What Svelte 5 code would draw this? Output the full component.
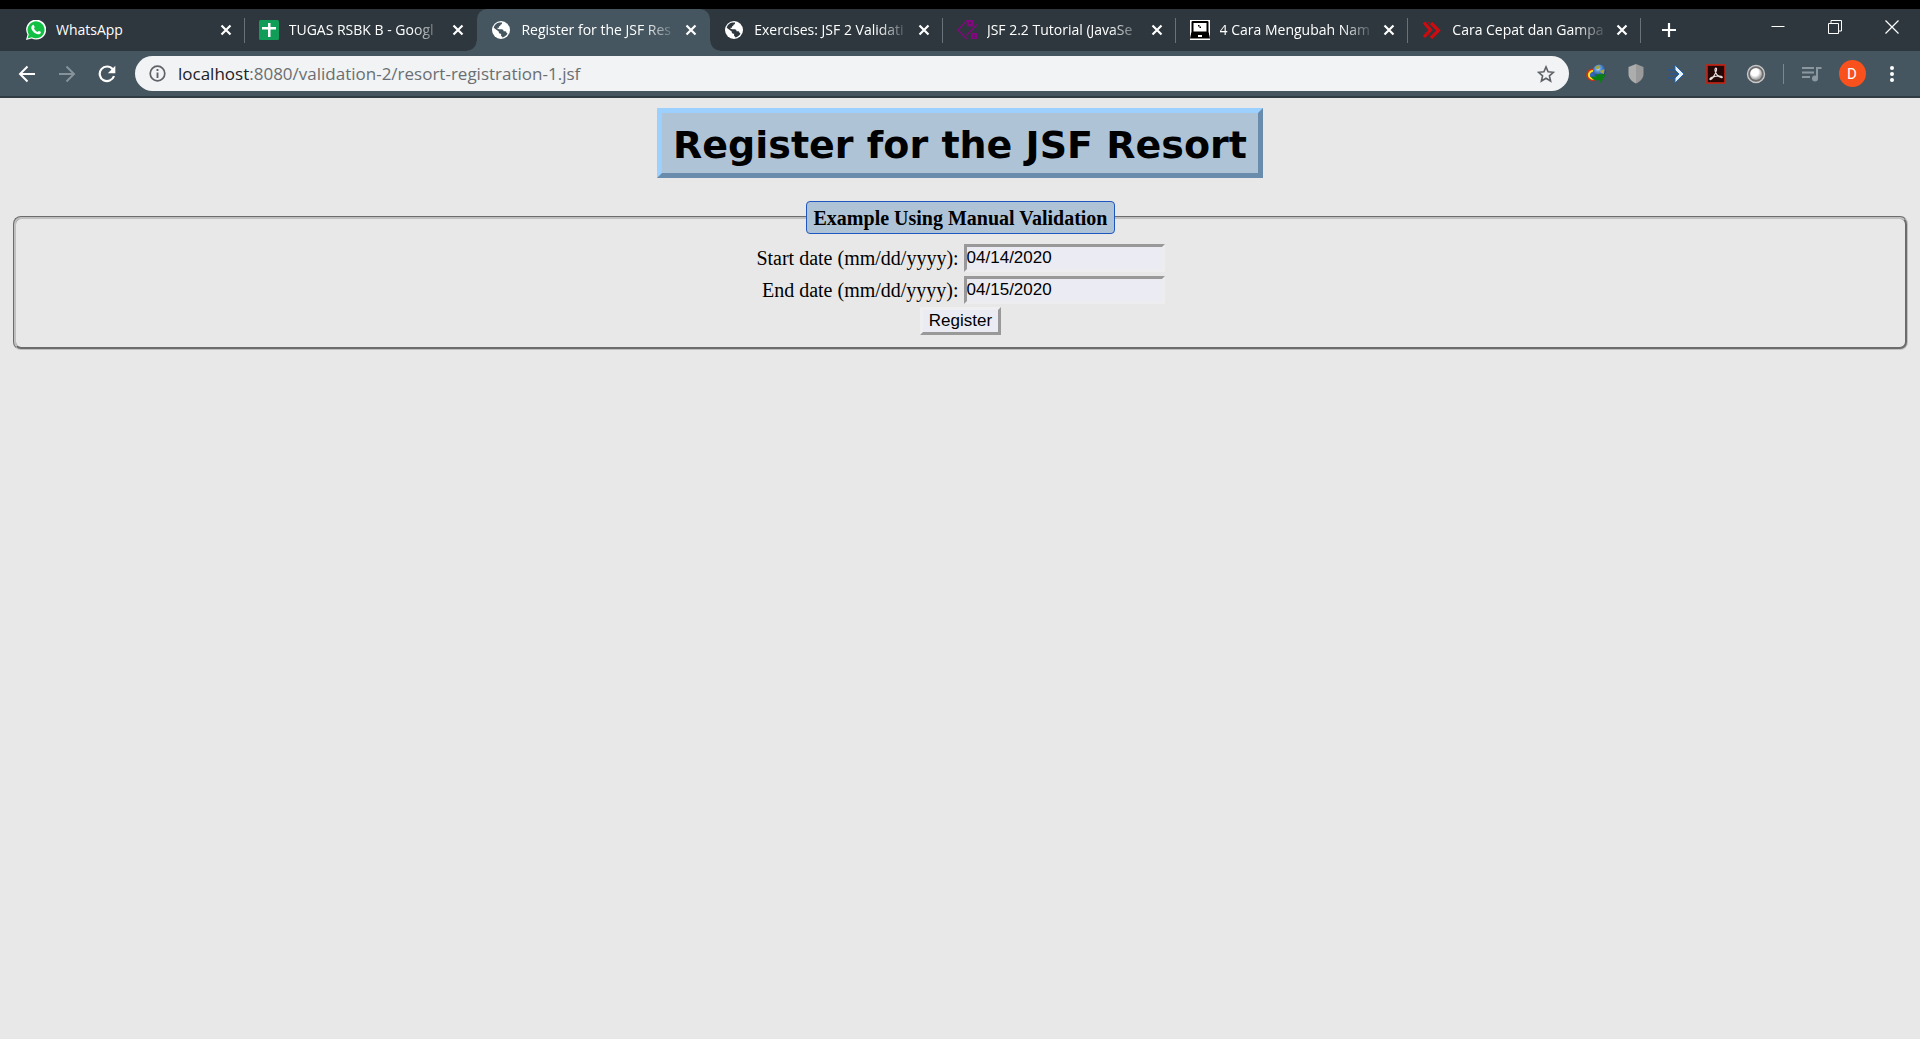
<script>
  const tabs = [
    { icon: 'whatsapp', title: 'WhatsApp' },
    { icon: 'sheets', title: 'TUGAS RSBK B - Googl' },
    { icon: 'globe', title: 'Register for the JSF Res', active: true },
    { icon: 'globe', title: 'Exercises: JSF 2 Validati' },
    { icon: 'tag', title: 'JSF 2.2 Tutorial (JavaSe' },
    { icon: 'laptop', title: '4 Cara Mengubah Nam' },
    { icon: 'chevrons', title: 'Cara Cepat dan Gampa' }
  ];
  let startDate = $state('04/14/2020');
  let endDate = $state('04/15/2020');
</script>

{#snippet favicon(name)}
  <svg class="favicon" viewBox="0 0 20 20" aria-hidden="true">
    {#if name === 'whatsapp'}
      <path d="M0 20 1.5 14.6A10 10 0 1 1 5.6 18.5z" fill="#fff" />
      <path d="M1.6 18.4 2.8 14.3A8.5 8.5 0 1 1 5.8 17.2z" fill="#12c143" />
      <path d="M6.7 5.1c.5-.4 1-.3 1.3.3l.7 1.6c.1.6-.8 1.2-.7 1.6.7 1.6 1.8 2.6 3.4 3.3.5 0 1-1.1 1.5-1l1.8.9c.5.4.1 1.5-.5 2-1.4 1-3.3.5-5-.6-1.6-1-3.2-2.7-3.8-4.5-.4-1.5.3-2.9 1.3-3.6z" fill="#fff" />
    {:else if name === 'sheets'}
      <rect width="20" height="20" rx="1.5" fill="#109d58" />
      <path d="M9 3h2.500v4H17v2.500h-5.500V17H9V9.500H3V7h6z" fill="#fff" />
    {:else if name === 'globe'}
      <circle cx="10" cy="10" r="9" fill="#fff" />
      <path class="land" d="M8.500 2.600 11 2.500c.2 1.200-.3 1.900-1.500 2.200-.1 1-.6 1.500-1.500 1.500v1.600H6.400c0 1 .5 1.400 1.600 1.400h2.600c1.300 0 2 .8 2 2h1.300c1 0 1.500.5 1.500 1.500l1.100.9c-1 2-3 3.600-5.200 3.900.1-1-.5-1.300-1.200-1.500v-2.300c-1.600 0-2.400-.8-2.400-2.300L2.700 7.700C3.400 5 5.500 3 8.500 2.600z" />
      <path d="M10.500 6.500c1.800.2 2.300-.7 2.600-2l2-.2 2.400 4-1 1.200-3-.2-.8-1.400-2.200-.2z" fill="#fff" />
    {:else if name === 'tag'}
      <g fill="none" stroke="#85077f" stroke-width="1.4">
        <path d="M10 .5 .9 10l9.100 9M20 4.500 9.500 15.500" />
      </g>
      <path d="M10 0h6.500v6.500H10zM14 13h6v6h-6z" fill="#85077f" />
      <path d="M12 2h2v2h-2zM16 15h2v1h-2zM16 17h2v1h-2z" fill="#4f1c56" />
    {:else if name === 'laptop'}
      <rect width="20" height="20" fill="#fff" />
      <path d="M2.500 1h15q1 0 1 1v9.500l1.500 7H0l1.500-7V2q0-1 1-1zM3.500 3v8.500h13V3z" fill="#000" fill-rule="evenodd" />
      <path d="M8 5h1.500v1.500H11V8H9.500V6.500H8z" fill="#000" />
      <path d="M8 15h4v2H8z" fill="#fff" />
    {:else}
      <g fill="none" stroke="#d00b10" stroke-width="3.2">
        <path d="m2 2.500 6.500 7.500L2 17" />
        <path d="m9 3 7.500 7.500L9 18" />
      </g>
      <path d="m5 1 3 3M3 12l5 4" stroke="#b20d12" />
    {/if}
  </svg>
{/snippet}

<div class="browser">
  <header>
    <div class="tabstrip">
      <div class="tabs">
        {#each tabs as tab}
          <div class="tab" class:active={tab.active}>
            {@render favicon(tab.icon)}
            <span class="title" class:faded={tab.title.length > 16}>{tab.title}</span>
            <button class="close" aria-label="Close tab">
              <svg width="12" height="12" viewBox="0 0 12 12"><path d="m1.500 1.500 9 9m0-9-9 9" stroke="#fff" stroke-width="2.2" /></svg>
            </button>
          </div>
        {/each}
      </div>
      <button class="newtab" aria-label="New tab">
        <svg width="16" height="16" viewBox="0 0 16 16"><path d="M8 1v14M1 8h14" stroke="#fff" stroke-width="2.2" /></svg>
      </button>
      <div class="window-controls">
        <button aria-label="Minimize"><svg width="14" height="14" viewBox="0 0 14 14"><path d="M.5 6.500h13" stroke="#fff" /></svg></button>
        <button aria-label="Restore"><svg width="14" height="14" viewBox="0 0 14 14"><path d="M.5 3.500h10v10H.5zM3 3V.5h10.500V11H11" fill="none" stroke="#fff" /></svg></button>
        <button aria-label="Close"><svg width="14" height="14" viewBox="0 0 14 14"><path d="m.5.5 13 13m0-13-13 13" stroke="#fff" stroke-width="1.2" /></svg></button>
      </div>
    </div>

    <div class="toolbar">
      <button class="tool" aria-label="Back">
        <svg width="18" height="18" viewBox="0 0 18 18"><path d="M17 9H2m7.500-7.500L2 9l7.500 7.500" fill="none" stroke="#fff" stroke-width="2" /></svg>
      </button>
      <button class="tool" aria-label="Forward">
        <svg width="18" height="18" viewBox="0 0 18 18"><path d="M1 9h15M8.500 1.500 16 9l-7.500 7.500" fill="none" stroke="#87939a" stroke-width="2" /></svg>
      </button>
      <button class="tool" aria-label="Reload">
        <svg width="18" height="18" viewBox="0 0 18 18"><path d="M14.700 4.200A7.300 7.300 0 1 0 16 11" fill="none" stroke="#fff" stroke-width="2.2" /><path d="M17.300.7v7.500H9.800z" fill="#fff" /></svg>
      </button>
      <div class="address">
        <svg width="17" height="17" viewBox="0 0 17 17" aria-hidden="true"><circle cx="8.5" cy="8.5" r="7.3" fill="none" stroke="#5f6368" stroke-width="1.7" /><path d="M8.500 7.500V13M8.500 4v2" stroke="#5f6368" stroke-width="1.9" /></svg>
        <div class="url"><b>localhost</b>:8080/validation-2/resort-registration-1.jsf</div>
        <button class="star" aria-label="Bookmark this page">
          <svg width="18" height="18" viewBox="0 0 18 18"><path d="m9 1.900 2.100 4.900 5.300.5-4 3.500 1.200 5.200L9 13.200 4.400 16l1.200-5.200-4-3.500 5.300-.5z" fill="none" stroke="#5f6368" stroke-width="1.6" /></svg>
        </button>
      </div>
      <button class="tool" aria-label="Download manager">
        <svg width="20" height="20" viewBox="0 0 20 20">
          <defs><radialGradient id="ball" cx=".4" cy=".3" r=".7"><stop stop-color="#e7f2ff" /><stop offset=".3" stop-color="#5d9bdf" /><stop offset="1" stop-color="#0f3279" /></radialGradient></defs>
          <path d="M8 4.500C3 4 0 7.500.3 11.500c.5 4.500 5.700 7 10 4.500l-2-3z" fill="#c93315" />
          <path d="M8 6C4 5.700 1.400 8.500 2 12c.9 3.500 5 4.800 8 3z" fill="#ffe21c" />
          <path d="M8 7.800c-3 0-4.700 2-3.900 4.500 1 2.200 3.900 2.700 5.900 2z" fill="#3564b5" />
          <circle cx="13.3" cy="7" r="6.4" fill="url(#ball)" />
          <path d="M9 4c1-2 4-3 5-2s-1 4-3 3zM14 7l4.500-2-.5 5-3-1z" fill="#a8a63a" />
          <path d="M5 12c3 1.300 5 1 6-1l-1.500-1L20 10.500 14.500 19 13 16c-4 1-7-.5-8-4z" fill="#0b7d15" />
        </svg>
      </button>
      <button class="tool" aria-label="Shield">
        <svg width="20" height="20" viewBox="0 0 20 20"><path d="M10 0 2.500 3v7c0 4 3 7.500 7.500 9.500z" fill="#adadad" /><path d="m10 0 7.500 3v7c0 4-3 7.500-7.500 9.500z" fill="#9a9a9a" /></svg>
      </button>
      <button class="tool" aria-label="Shortcuts">
        <svg width="20" height="20" viewBox="0 0 20 20"><path d="M1 6h8M3 10h8M1 14h8" stroke="#285791" stroke-width="1.6" /><path d="m9 1 9 9-9 9v-5l4-4-4-4z" fill="#e6f3ff" stroke="#2466ac" /></svg>
      </button>
      <button class="tool" aria-label="Acrobat">
        <svg width="20" height="20" viewBox="0 0 20 20"><rect x="1" y="1" width="18" height="18" fill="#250708" stroke="#c9220f" stroke-width="1.6" /><path d="M4 15.500c-1-1.500 5-3.500 9-3.500 4 .1 4 2 2 1.500-3-.8-6-4.500-6-7.500 0-3 2-2 1.500 0C10 9 6 16 4 15.500z" fill="none" stroke="#e8dede" stroke-width="1.2" /></svg>
      </button>
      <button class="tool" aria-label="Recorder">
        <svg width="20" height="20" viewBox="0 0 20 20">
          <defs><radialGradient id="lens" cx=".4" cy=".35" r=".6"><stop offset=".5" stop-color="#fff" /><stop offset="1" stop-color="#a6a6a6" /></radialGradient></defs>
          <circle cx="10" cy="10" r="8.5" fill="#6c6c6c" stroke="#c7c7c7" stroke-width="1.4" /><circle cx="10" cy="10" r="6" fill="url(#lens)" />
        </svg>
      </button>
      <span class="divider"></span>
      <button class="tool" aria-label="Media controls">
        <svg width="20" height="18" viewBox="0 0 20 18"><path d="M0 3h12M0 7.500h12M0 12h8" stroke="#8c989f" stroke-width="2" /><path d="M15 13V3h4.500" fill="none" stroke="#8c989f" stroke-width="2" /><circle cx="13" cy="13.5" r="3" fill="#8c989f" /></svg>
      </button>
      <button class="tool" aria-label="Profile"><span class="avatar">D</span></button>
      <button class="tool" aria-label="Menu">
        <svg width="4" height="18" viewBox="0 0 4 18" fill="#fff"><circle cx="2" cy="3" r="2" /><circle cx="2" cy="9" r="2" /><circle cx="2" cy="15" r="2" /></svg>
      </button>
    </div>
  </header>

  <main>
    <h1>Register for the JSF Resort</h1>
    <form onsubmit={(e) => e.preventDefault()}>
      <fieldset>
        <legend>Example Using Manual Validation</legend>
        <div class="fields">
          <label for="start">Start date (mm/dd/yyyy):</label>
          <input id="start" type="text" bind:value={startDate} />
          <label for="end">End date (mm/dd/yyyy):</label>
          <input id="end" type="text" bind:value={endDate} />
        </div>
        <button class="submit" type="submit">Register</button>
      </fieldset>
    </form>
  </main>
</div>

<style>
  :global(body) { margin: 0; background: #e8e8e8; }
  .browser { min-height: 100vh; font-family: "Open Sans", "Noto Sans", sans-serif; }
  header button { border: 0; padding: 0; background: none; display: flex; align-items: center; justify-content: center; }
  svg { display: block; flex: none; }

  .tabstrip { display: flex; height: 42px; border-top: 9px solid #000; background: #2d373d; padding-left: 12px; }
  .tabs { display: flex; flex: 1; min-width: 0; }
  .tab { position: relative; flex: 1 1 0; min-width: 0; box-sizing: border-box; display: flex; align-items: center; padding: 0 9px 0 14px; color: #fff; font-size: 14px; }
  .tab::after { content: ""; position: absolute; right: 0; top: 9px; width: 1px; height: 25px; background: #67727a; }
  .tab.active { background: #455660; border-radius: 10px 10px 0 0; }
  .tab:has(+ .active)::after { top: auto; bottom: 0; width: 10px; height: 10px; background: radial-gradient(circle at 0 0, #2d373d 9px, #455660 10px); }
  .tab.active::after { right: -10px; top: auto; bottom: 0; width: 10px; height: 10px; background: radial-gradient(circle at 100% 0, #2d373d 9px, #455660 10px); }
  .favicon { width: 20px; height: 20px; }
  .land { fill: #2d373d; }
  .active .land { fill: #455660; }
  .title { flex: 1; min-width: 0; margin: 0 4px 0 10px; overflow: hidden; white-space: nowrap; line-height: 20px; }
  .faded { mask-image: linear-gradient(to right, #000 calc(100% - 32px), transparent); }
  .close { width: 20px; height: 20px; }
  .newtab { width: 56px; }
  .window-controls { display: flex; height: 36px; margin-left: 52px; }
  .window-controls button { width: 57px; }

  .toolbar { display: flex; align-items: center; height: 45px; padding: 0 8px 0 7px; background: #455660; border-bottom: 2px solid #303c43; }
  .tool { width: 40px; height: 35px; flex: none; }
  .address { flex: 1; min-width: 0; height: 35px; box-sizing: border-box; display: flex; align-items: center; margin: 0 7px 0 8px; padding: 0 14px; border-radius: 18px; background: #f1f3f4; }
  .url { flex: 1; min-width: 0; overflow: hidden; white-space: nowrap; margin-left: 12px; color: #6a6e72; font-size: 17px; line-height: 24px; }
  .url b { font-weight: 400; color: #202124; }
  .divider { width: 1px; height: 20px; margin: 0 8px 0 7px; background: #7b878e; }
  .avatar { display: flex; align-items: center; justify-content: center; width: 27px; height: 27px; border-radius: 50%; background: #f8511d; color: #fff; font: 15px Roboto, sans-serif; }

  main { padding: 10px; font-family: "Liberation Serif", "Times New Roman", serif; font-size: 20px; color: #000; }
  h1 { box-sizing: border-box; width: fit-content; margin: 0 auto; padding: 7px 11px 3px; border: 5px solid; border-color: #9cd0ff #698cac #698cac #9cd0ff; background: #afc3d7; font: bold 38px/50px "DejaVu Sans", Verdana, sans-serif; }
  form { margin-top: 23px; }
  fieldset { margin: 0 2px 0 3px; padding: 10px 15px 12px; border: 3px groove #c0c0c0; border-radius: 8px; text-align: center; }
  legend { margin: 0 auto; padding: 5px 7px 3px; border: 1px solid #1f56c0; border-radius: 4px; background: #afc3d7; font-weight: bold; line-height: 23px; }
  .fields { display: grid; grid-template-columns: auto auto; justify-content: center; gap: 4px 5px; text-align: right; line-height: 28px; }
  input, .submit { box-sizing: border-box; height: 28px; border: 3px solid; background: #ebecf3; font: 17px "Liberation Sans", Arial, sans-serif; color: #000; }
  input { width: 201px; padding: 0 0 1px; border-color: #999 #ededf0 #ededf0 #999; }
  .submit { display: block; margin: 3px auto 0; padding: 0 6px; border-color: #efeff1 #999 #999 #efeff1; line-height: 20px; }
</style>
